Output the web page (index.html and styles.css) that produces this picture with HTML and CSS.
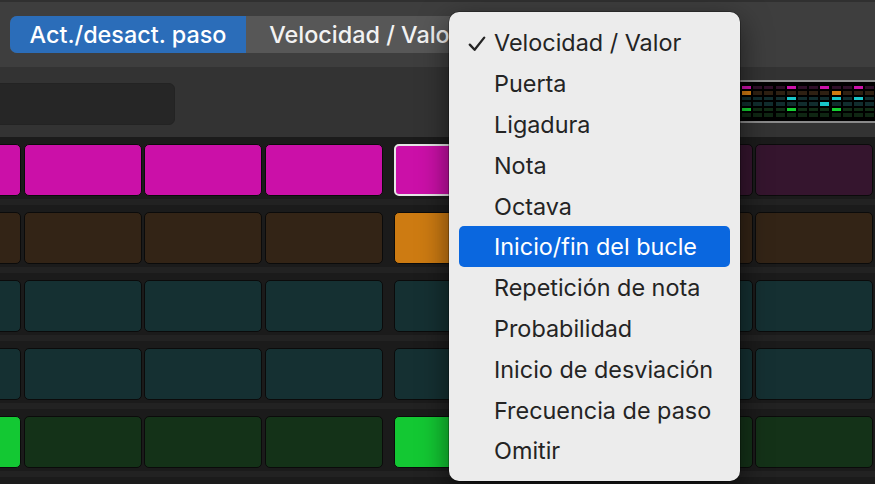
FILE: index.html
```html
<!DOCTYPE html>
<html lang="es">
<head>
<meta charset="utf-8">
<title>Step Sequencer</title>
<link rel="stylesheet" href="styles.css">
</head>
<body>
<div class="app">
  <header class="topbar">
    <div class="segmented">
      <div class="seg seg-on">Act./desact. paso</div>
      <div class="seg">Velocidad / Valor</div>
    </div>
  </header>

  <div class="toolbar">
    <div class="field"></div>
    <div class="overview">
      <span class="mc m on"></span><span class="mc m"></span><span class="mc m"></span><span class="mc m"></span><span class="mc m on"></span><span class="mc m"></span><span class="mc m"></span><span class="mc m on"></span><span class="mc m"></span><span class="mc m"></span><span class="mc m on"></span><span class="mc m"></span>
      <span class="mc o on"></span><span class="mc o"></span><span class="mc o"></span><span class="mc o"></span><span class="mc o"></span><span class="mc o"></span><span class="mc o"></span><span class="mc o"></span><span class="mc o on"></span><span class="mc o"></span><span class="mc o"></span><span class="mc o"></span>
      <span class="mc c"></span><span class="mc c"></span><span class="mc c"></span><span class="mc c"></span><span class="mc c on"></span><span class="mc c"></span><span class="mc c"></span><span class="mc c"></span><span class="mc c on"></span><span class="mc c"></span><span class="mc c on"></span><span class="mc c"></span>
      <span class="mc c"></span><span class="mc c"></span><span class="mc c"></span><span class="mc c"></span><span class="mc c"></span><span class="mc c"></span><span class="mc c"></span><span class="mc c on"></span><span class="mc c"></span><span class="mc c"></span><span class="mc c"></span><span class="mc c"></span>
      <span class="mc g on"></span><span class="mc g"></span><span class="mc g"></span><span class="mc g"></span><span class="mc g on"></span><span class="mc g"></span><span class="mc g"></span><span class="mc g"></span><span class="mc g on"></span><span class="mc g"></span><span class="mc g"></span><span class="mc g"></span>
      <span class="mc g2"></span><span class="mc g2"></span><span class="mc g2"></span><span class="mc g2"></span><span class="mc g2"></span><span class="mc g2"></span><span class="mc g2"></span><span class="mc g2"></span><span class="mc g2"></span><span class="mc g2"></span><span class="mc g2"></span><span class="mc g2"></span>
    </div>
  </div>

  <div class="grid">
    <div class="row">
      <div class="group"><div class="cell mag on"></div><div class="cell mag on"></div><div class="cell mag on"></div><div class="cell mag on"></div></div>
      <div class="group"><div class="cell mag on sel"></div><div class="cell mag"></div><div class="cell mag"></div><div class="cell mag"></div></div>
    </div>
    <div class="row">
      <div class="group"><div class="cell org"></div><div class="cell org"></div><div class="cell org"></div><div class="cell org"></div></div>
      <div class="group"><div class="cell org on"></div><div class="cell org"></div><div class="cell org"></div><div class="cell org"></div></div>
    </div>
    <div class="row">
      <div class="group"><div class="cell teal"></div><div class="cell teal"></div><div class="cell teal"></div><div class="cell teal"></div></div>
      <div class="group"><div class="cell teal"></div><div class="cell teal"></div><div class="cell teal"></div><div class="cell teal"></div></div>
    </div>
    <div class="row">
      <div class="group"><div class="cell teal"></div><div class="cell teal"></div><div class="cell teal"></div><div class="cell teal"></div></div>
      <div class="group"><div class="cell teal"></div><div class="cell teal"></div><div class="cell teal"></div><div class="cell teal"></div></div>
    </div>
    <div class="row">
      <div class="group"><div class="cell grn on"></div><div class="cell grn"></div><div class="cell grn"></div><div class="cell grn"></div></div>
      <div class="group"><div class="cell grn on"></div><div class="cell grn"></div><div class="cell grn"></div><div class="cell grn"></div></div>
    </div>
    <div class="row">
      <div class="group"><div class="cell grn"></div><div class="cell grn"></div><div class="cell grn"></div><div class="cell grn"></div></div>
      <div class="group"><div class="cell grn"></div><div class="cell grn"></div><div class="cell grn"></div><div class="cell grn"></div></div>
    </div>
  </div>

  <ul class="menu">
    <li class="item checked"><svg class="check" width="18" height="16" viewBox="0 0 18 16"><path d="M1.8 8.6 L6.6 13.8 L16.2 1.6" fill="none" stroke="#242424" stroke-width="2.3" stroke-linecap="round" stroke-linejoin="round"/></svg>Velocidad / Valor</li>
    <li class="item">Puerta</li>
    <li class="item">Ligadura</li>
    <li class="item">Nota</li>
    <li class="item">Octava</li>
    <li class="item active">Inicio/fin del bucle</li>
    <li class="item">Repetición de nota</li>
    <li class="item">Probabilidad</li>
    <li class="item">Inicio de desviación</li>
    <li class="item">Frecuencia de paso</li>
    <li class="item">Omitir</li>
  </ul>
</div>
</body>
</html>
```

FILE: styles.css
```css
html, body {
  margin: 0;
  padding: 0;
}
body {
  width: 875px;
  height: 484px;
  overflow: hidden;
  background: #1c1c1c;
  font-family: Inter, "Noto Sans", "Liberation Sans", sans-serif;
}
.app {
  position: relative;
  width: 875px;
  height: 484px;
  overflow: hidden;
}

/* top bar */
.topbar {
  height: 67px;
  box-sizing: border-box;
  background: #3e3e3e;
  border-top: 2px solid #303030;
  padding: 14px 0 0 10px;
}
.segmented {
  display: flex;
  width: 472px;
  height: 37px;
  border-radius: 7px;
  overflow: hidden;
  background: #575757;
}
.seg {
  flex: 1;
  display: flex;
  align-items: center;
  justify-content: center;
  color: #f2f2f2;
  font-size: 23.4px;
  font-weight: 500;
  white-space: nowrap;
}
.seg-on {
  background: #2b6db9;
  color: #ffffff;
}

/* toolbar */
.toolbar {
  height: 70px;
  background: #333333;
  display: flex;
  justify-content: space-between;
  align-items: flex-start;
}
.field {
  margin: 16px 0 0 -20px;
  width: 195px;
  height: 42px;
  box-sizing: border-box;
  background: #262626;
  border: 1px solid #232323;
  border-radius: 6px;
}
.overview {
  margin-top: 13px;
  width: 135px;
  box-sizing: border-box;
  padding: 4px 0 4px 2px;
  background: #000;
  border-top: 2px solid #8f8f8f;
  border-bottom: 2px solid #8a8a8a;
  display: grid;
  grid-template-columns: repeat(12, 9px);
  grid-template-rows: repeat(6, 3.2px);
  column-gap: 2.2px;
  row-gap: 2.3px;
}
.mc { display: block; }
.mc.m { background: #2e0f28; }
.mc.m.on { background: #cc12aa; }
.mc.o { background: #2e2012; }
.mc.o.on { background: #d17b12; }
.mc.c { background: #112d2e; }
.mc.c.on { background: #18c6c9; }
.mc.g { background: #112d16; }
.mc.g.on { background: #15d132; }
.mc.g2 { background: #0f2613; }

/* grid */
.grid {
  display: flex;
  flex-direction: column;
}
.row {
  display: flex;
  gap: 11px;
  margin-left: -97px;
  height: 68px;
  box-sizing: border-box;
  padding-top: 7px;
  background: linear-gradient(to bottom, #1b1b1b 0, #1b1b1b 62px, #222222 62px, #222222 68px);
}
.group {
  display: grid;
  grid-template-columns: repeat(4, 118px);
  gap: 2.5px;
}
.cell {
  height: 52px;
  box-sizing: border-box;
  border: 1px solid #0b0b0b;
  border-radius: 5px;
}
.cell.mag { background: #35152e; }
.cell.mag.on { background: #cb10a8; }
.cell.org { background: #332416; }
.cell.org.on { background: #cd7b12; }
.cell.teal { background: #153032; }
.cell.grn { background: #143218; }
.cell.grn.on { background: #13c833; }
.cell.sel { border: 2px solid #e6e6e6; }

/* popup menu */
.menu {
  position: absolute;
  left: 449px;
  top: 12px;
  width: 291px;
  height: 469px;
  box-sizing: border-box;
  margin: 0;
  padding: 10px 10px;
  list-style: none;
  background: #ececec;
  border-radius: 10px;
  box-shadow: 0 0 0 0.5px rgba(0,0,0,0.5), 0 10px 30px rgba(0,0,0,0.55);
}
.item {
  position: relative;
  height: 40.8px;
  display: flex;
  align-items: center;
  padding-left: 35px;
  padding-top: 1px;
  box-sizing: border-box;
  border-radius: 5px;
  color: #242424;
  font-size: 23.4px;
  white-space: nowrap;
}
.item.active {
  background: #0a67df;
  color: #ffffff;
}
.check {
  position: absolute;
  left: 9px;
  top: 14px;
}
```
